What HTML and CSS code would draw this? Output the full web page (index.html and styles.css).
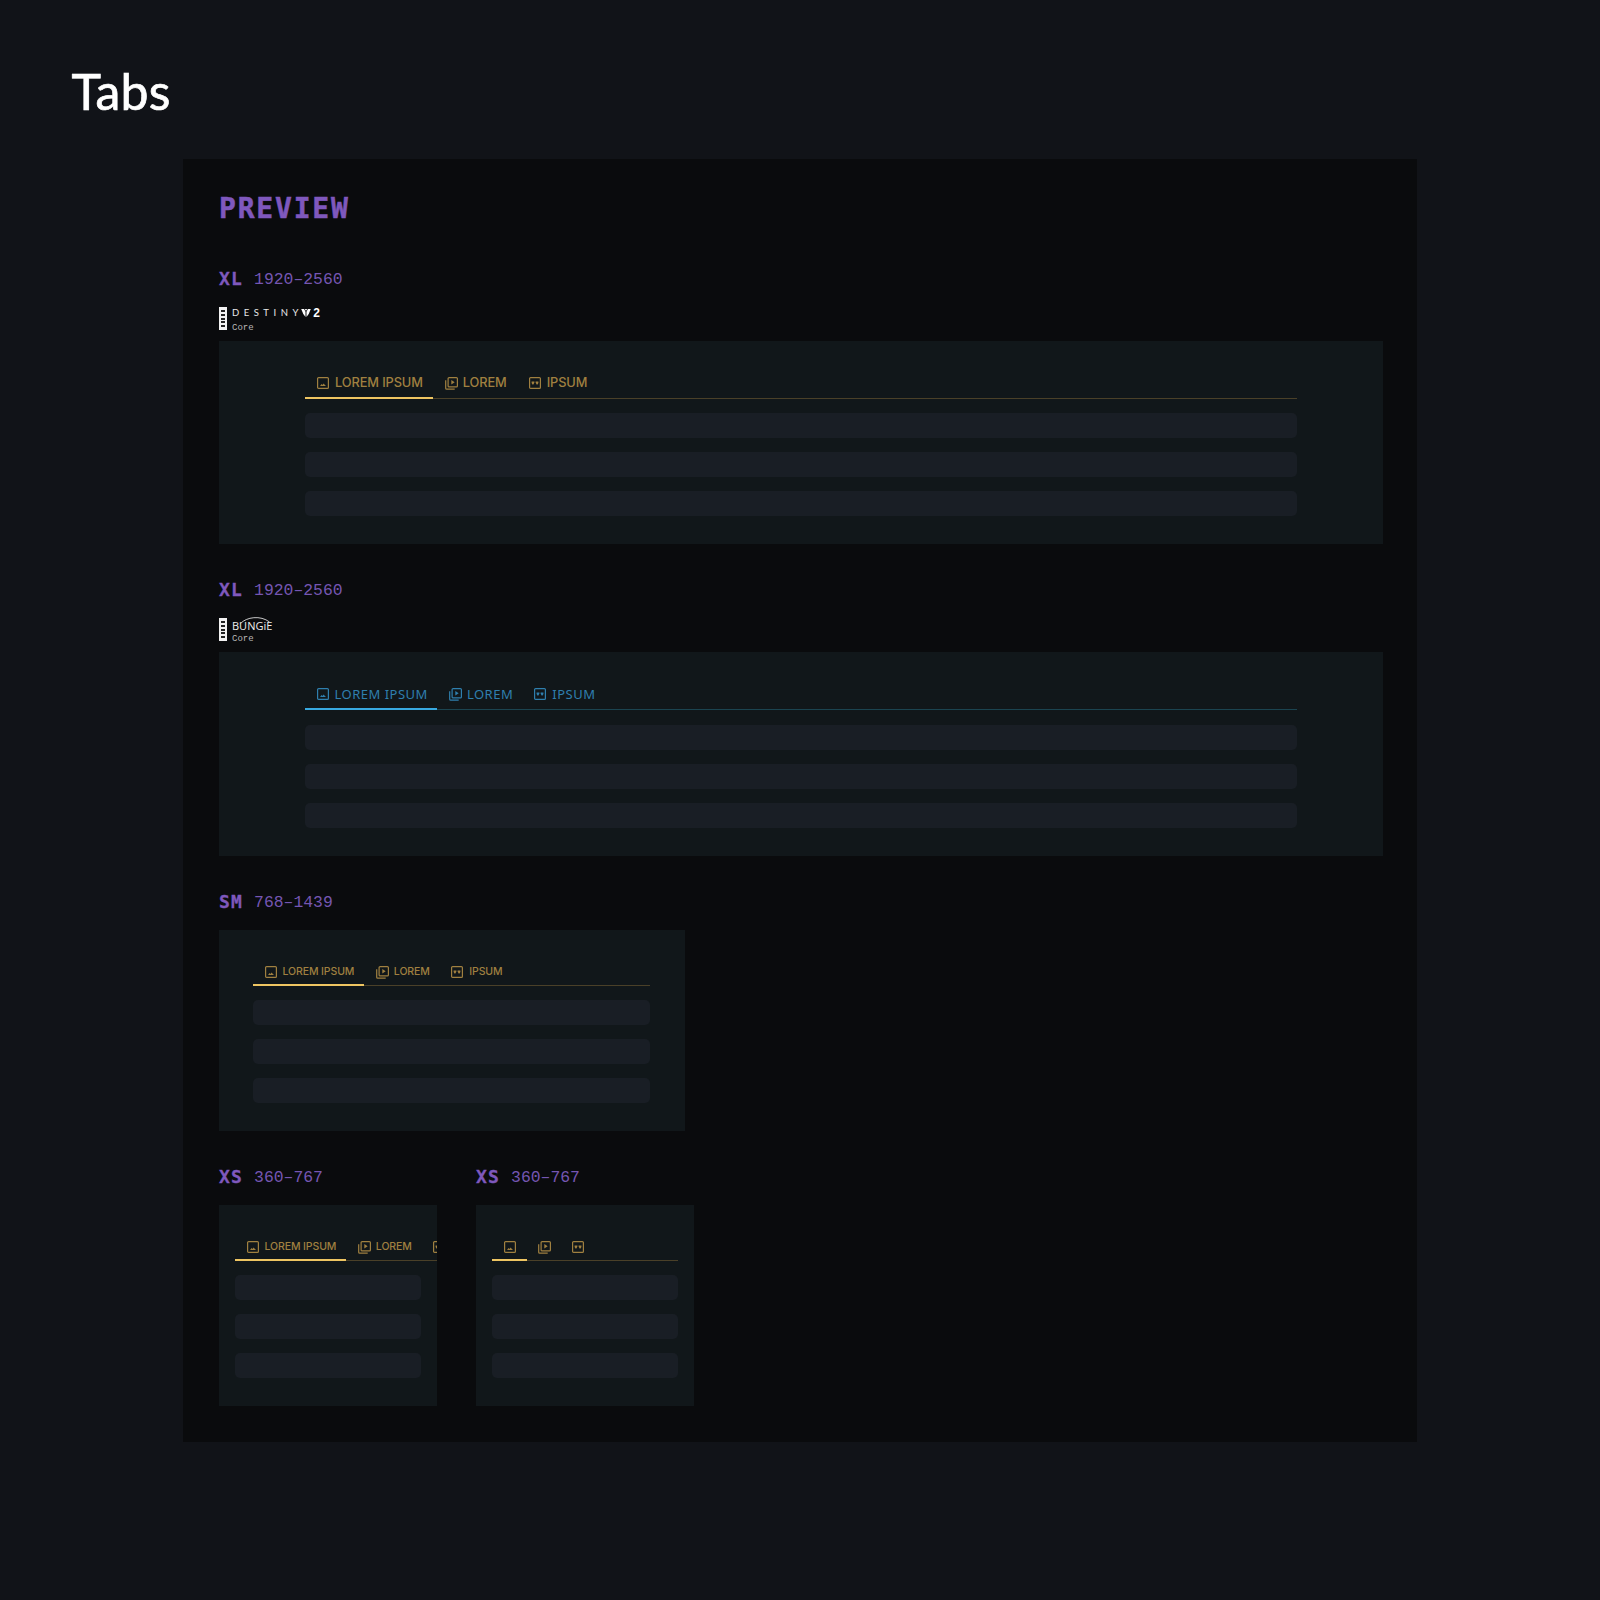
FILE: index.html
```
<!DOCTYPE html>
<html lang="en">
<head>
<meta charset="utf-8">
<title>Tabs</title>
<link rel="stylesheet" href="styles.css">
</head>
<body>
<svg class="defs" width="0" height="0" aria-hidden="true">
  <symbol id="i-image" viewBox="0 0 12 12">
    <rect x=".6" y=".6" width="10.8" height="10.8" rx="1" fill="none" stroke="currentColor" stroke-width="1.2"/>
    <path d="M3 9l1.6-2 1 1.1.9-1.6L9 9z" fill="currentColor"/>
  </symbol>
  <symbol id="i-video" viewBox="0 0 13 13">
    <rect x="3.1" y=".6" width="9.3" height="9.3" rx="1" fill="none" stroke="currentColor" stroke-width="1.2"/>
    <path d="M.7 3.2v8a1 1 0 0 0 1 1h8" fill="none" stroke="currentColor" stroke-width="1.2"/>
    <path d="M6.3 3l3.4 2.3-3.4 2.3z" fill="currentColor"/>
  </symbol>
  <symbol id="i-clip" viewBox="0 0 12 12">
    <rect x=".6" y=".6" width="10.8" height="10.8" rx="1" fill="none" stroke="currentColor" stroke-width="1.2"/>
    <path d="M2.6 4.6h2.8v1L4.4 7.4H3.4L2.6 6zM6.6 4.6h2.8V6l-.8 1.4h-1L6.6 5.6z" fill="currentColor"/>
  </symbol>
</svg>

<main class="page">
  <h1 class="title">Tabs</h1>
  <section class="panel">
    <h2 class="preview">PREVIEW</h2>

    <div class="bp">
      <div class="bp-head"><b>XL</b><span>1920–2560</span></div>
      <div class="brand">
        <div class="brand-mark"><i></i><i></i><i></i><i></i><i></i></div>
        <div class="brand-text">
          <div class="brand-name destiny">DESTINY<svg class="tricorn" viewBox="0 0 12 10"><path d="M0 0h3.6L5.4 3.4V10L2.6 6.4zM12 0H8.4L6.6 3.4V10l2.8-3.6zM4.6 0h2.8L6 2.6z" fill="currentColor"/></svg><strong>2</strong></div>
          <div class="brand-sub">Core</div>
        </div>
      </div>
      <div class="frame frame-xl gold">
        <div class="tabs">
          <div class="tab active"><svg class="ico"><use href="#i-image"/></svg>LOREM IPSUM</div>
          <div class="tab"><svg class="ico ico-stack"><use href="#i-video"/></svg>LOREM</div>
          <div class="tab"><svg class="ico"><use href="#i-clip"/></svg>IPSUM</div>
        </div>
        <div class="bars"><div class="bar"></div><div class="bar"></div><div class="bar"></div></div>
      </div>
    </div>

    <div class="bp">
      <div class="bp-head"><b>XL</b><span>1920–2560</span></div>
      <div class="brand">
        <div class="brand-mark"><i></i><i></i><i></i><i></i><i></i></div>
        <div class="brand-text">
          <div class="brand-name bungie">BUNGiE<svg class="arc" viewBox="0 0 32 8"><path d="M2 7.5C8 1 22 -1 31 6" fill="none" stroke="currentColor" stroke-width=".9"/></svg></div>
          <div class="brand-sub">Core</div>
        </div>
      </div>
      <div class="frame frame-xl blue">
        <div class="tabs">
          <div class="tab active"><svg class="ico"><use href="#i-image"/></svg>LOREM IPSUM</div>
          <div class="tab"><svg class="ico ico-stack"><use href="#i-video"/></svg>LOREM</div>
          <div class="tab"><svg class="ico"><use href="#i-clip"/></svg>IPSUM</div>
        </div>
        <div class="bars"><div class="bar"></div><div class="bar"></div><div class="bar"></div></div>
      </div>
    </div>

    <div class="bp">
      <div class="bp-head"><b>SM</b><span>768–1439</span></div>
      <div class="frame frame-sm gold">
        <div class="tabs">
          <div class="tab active"><svg class="ico"><use href="#i-image"/></svg>LOREM IPSUM</div>
          <div class="tab"><svg class="ico ico-stack"><use href="#i-video"/></svg>LOREM</div>
          <div class="tab"><svg class="ico"><use href="#i-clip"/></svg>IPSUM</div>
        </div>
        <div class="bars"><div class="bar"></div><div class="bar"></div><div class="bar"></div></div>
      </div>
    </div>

    <div class="xs-row">
      <div class="bp">
        <div class="bp-head"><b>XS</b><span>360–767</span></div>
        <div class="frame frame-xs gold">
          <div class="tabs">
            <div class="tab active"><svg class="ico"><use href="#i-image"/></svg>LOREM IPSUM</div>
            <div class="tab"><svg class="ico ico-stack"><use href="#i-video"/></svg>LOREM</div>
            <div class="tab"><svg class="ico"><use href="#i-clip"/></svg>IPSUM</div>
          </div>
          <div class="bars"><div class="bar"></div><div class="bar"></div><div class="bar"></div></div>
        </div>
      </div>
      <div class="bp">
        <div class="bp-head"><b>XS</b><span>360–767</span></div>
        <div class="frame frame-xs frame-icons gold">
          <div class="tabs">
            <div class="tab active"><svg class="ico"><use href="#i-image"/></svg></div>
            <div class="tab"><svg class="ico ico-stack"><use href="#i-video"/></svg></div>
            <div class="tab"><svg class="ico"><use href="#i-clip"/></svg></div>
          </div>
          <div class="bars"><div class="bar"></div><div class="bar"></div><div class="bar"></div></div>
        </div>
      </div>
    </div>
  </section>
</main>
</body>
</html>
```
FILE: styles.css
```
* { box-sizing: border-box; }
html, body { margin: 0; padding: 0; }
body { background: #111318; color: #fff; }
.defs { position: absolute; }
.page { height: 1600px; padding-top: 61px; }
.title {
  margin: 0 0 38px 71.5px;
  font: 400 50px/60px Lato, sans-serif;
  letter-spacing: .2px;
  -webkit-text-stroke: .7px #fff;
  color: #fff;
}
.panel {
  margin-left: 183px;
  width: 1234px;
  height: 1283px;
  padding: 30px 34px 35px 36px;
  background: #0a0b0d;
}
.preview {
  margin: 0 0 37px;
  font: 700 28px/40px "DejaVu Sans Mono", monospace;
  letter-spacing: 1.8px;
  -webkit-text-stroke: .5px #7f58bd;
  color: #7f58bd;
}
.bp { margin-bottom: 33px; }
.bp:last-child { margin-bottom: 0; }
.bp-head {
  display: flex;
  align-items: center;
  gap: 11px;
  height: 25px;
  margin-bottom: 16px;
  color: #7f58bd;
  font-family: "Liberation Mono", monospace;
}
.bp-head b { font: 700 18px/25px "DejaVu Sans Mono", monospace; letter-spacing: 1.2px; -webkit-text-stroke: .3px #7f58bd; }
.bp-head span { font-size: 16.4px; color: #7556b2; padding-top: 2px; }
.brand {
  display: flex;
  gap: 5px;
  height: 23px;
  margin-bottom: 11px;
}
.brand-mark {
  display: flex;
  flex-direction: column;
  justify-content: space-between;
  align-items: center;
  width: 8px;
  height: 23px;
  padding: 3px 0;
  background: #f2f2f2;
}
.brand-mark i { display: block; width: 4px; height: 2px; background: #222; }
.brand-text { display: flex; flex-direction: column; justify-content: space-between; }
.brand-name { display: flex; align-items: center; position: relative; height: 12px; color: #e8e8e8; }
.destiny { font: 400 9.5px/12px Lato, sans-serif; letter-spacing: 4.5px; }
.destiny strong { font: 700 12px/12px "Liberation Sans", sans-serif; letter-spacing: 0; color: #fff; margin-left: 2px; }
.tricorn { width: 10px; height: 8px; margin-left: -1.5px; color: #fff; }
.bungie { font: 500 11px/12px "Open Sans", sans-serif; padding-top: 3px; color: #eee; }
.arc { position: absolute; left: 6px; top: -2px; width: 33px; height: 8px; color: #ddd; }
.brand-sub { height: 12px; font: 400 9px/19px "Liberation Mono", monospace; color: #b8b8b8; }

.frame { background: #11171a; overflow: hidden; }
.frame-xl { height: 203px; padding: 26px 86px 0; }
.frame-xl.blue { height: 204px; }
.frame-sm { width: 466px; height: 201px; padding: 30px 35px 0 34px; }
.frame-xs { width: 218px; height: 201px; padding: 30px 16px 0; }
.frame-xs .tabs { margin-right: -16px; }
.frame-icons .tabs { margin-right: 0; }

.tabs {
  display: flex;
  height: 32px;
  border-bottom: 1px solid;
  white-space: nowrap;
}
.frame-sm .tabs, .frame-xs .tabs { height: 26px; }
.gold .tabs { border-color: #4a4028; }
.blue .tabs { border-color: #1b4450; }
.tab {
  display: flex;
  flex: none;
  align-items: center;
  gap: 6px;
  height: 32px;
  padding: 2px 10px 0 12px;
  border-bottom: 2px solid transparent;
  font: 500 12.8px/1 Inter, sans-serif;
  letter-spacing: -.1px;
}
.frame-sm .tab, .frame-xs .tab {
  height: 26px;
  padding: 0 10px 0 11.5px;
  font-size: 10.5px;
}
.gold .tab { color: #a08040; }
.blue .tab {
  padding: 2px 9.5px 0 11.5px;
  color: #2f7fae;
  font: 400 13px/1 "Noto Sans", sans-serif;
  letter-spacing: .5px;
}
.ico { width: 12px; height: 12px; flex: none; }
.ico-stack { width: 13px; height: 13px; margin-right: -1px; }
.gold .tab.active { border-color: #eec562; }
.blue .tab.active { border-color: #38a9e0; }
.frame-icons .tab { padding: 0 11px 0 12px; }
.frame-icons .tab + .tab { padding: 0 10.5px; }
.frame-icons .ico-stack { margin-right: 0; }

.bars { display: flex; flex-direction: column; gap: 14px; margin-top: 14px; }
.blue .bars { margin-top: 15px; }
.bar { height: 25px; background: #191e25; border-radius: 5px; }

.xs-row { display: flex; gap: 39px; }
```
